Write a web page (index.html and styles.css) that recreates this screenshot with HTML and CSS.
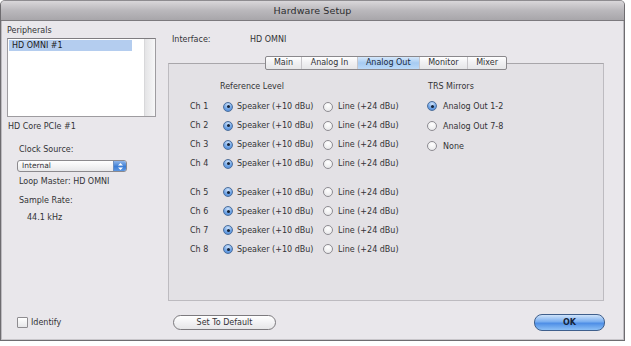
FILE: index.html
```html
<!DOCTYPE html>
<html>
<head>
<meta charset="utf-8">
<link rel="stylesheet" href="styles.css">
</head>
<body>
<div class="window">
  <div class="titlebar">Hardware Setup</div>
  <div class="main">
    <div class="left">
      <div class="txt">Peripherals</div>
      <div class="listbox">
        <div class="list-area"><div class="sel-row">HD OMNI #1</div></div>
        <div class="scroll"></div>
      </div>
      <div class="txt device">HD Core PCIe #1</div>
      <div class="txt clock-label">Clock Source:</div>
      <div class="select"><span class="select-text">Internal</span><span class="stepper"><svg width="7" height="9" viewBox="0 0 7 9"><path d="M1 3.5 L3.5 1 L6 3.5 Z M1 5.5 L3.5 8 L6 5.5 Z" fill="#fff"/></svg></span></div>
      <div class="txt loop">Loop Master: HD OMNI</div>
      <div class="txt rate-label">Sample Rate:</div>
      <div class="txt rate">44.1 kHz</div>
    </div>
    <div class="right">
      <div class="iface"><span class="iface-label">Interface:</span><span>HD OMNI</span></div>
      <div class="tabs">
        <span class="tab">Main</span><span class="tab">Analog In</span><span class="tab active">Analog Out</span><span class="tab">Monitor</span><span class="tab last">Mixer</span>
      </div>
      <div class="group">
        <div class="col-ref">
          <div class="txt head ref-head">Reference Level</div>
          <div class="rows">
            <div class="row"><span class="ch">Ch 1</span><span class="radio on"></span><span class="opt">Speaker (+10 dBu)</span><span class="radio"></span><span class="opt2">Line (+24 dBu)</span></div>
            <div class="row"><span class="ch">Ch 2</span><span class="radio on"></span><span class="opt">Speaker (+10 dBu)</span><span class="radio"></span><span class="opt2">Line (+24 dBu)</span></div>
            <div class="row"><span class="ch">Ch 3</span><span class="radio on"></span><span class="opt">Speaker (+10 dBu)</span><span class="radio"></span><span class="opt2">Line (+24 dBu)</span></div>
            <div class="row"><span class="ch">Ch 4</span><span class="radio on"></span><span class="opt">Speaker (+10 dBu)</span><span class="radio"></span><span class="opt2">Line (+24 dBu)</span></div>
          </div>
          <div class="rows rows2">
            <div class="row"><span class="ch">Ch 5</span><span class="radio on"></span><span class="opt">Speaker (+10 dBu)</span><span class="radio"></span><span class="opt2">Line (+24 dBu)</span></div>
            <div class="row"><span class="ch">Ch 6</span><span class="radio on"></span><span class="opt">Speaker (+10 dBu)</span><span class="radio"></span><span class="opt2">Line (+24 dBu)</span></div>
            <div class="row"><span class="ch">Ch 7</span><span class="radio on"></span><span class="opt">Speaker (+10 dBu)</span><span class="radio"></span><span class="opt2">Line (+24 dBu)</span></div>
            <div class="row"><span class="ch">Ch 8</span><span class="radio on"></span><span class="opt">Speaker (+10 dBu)</span><span class="radio"></span><span class="opt2">Line (+24 dBu)</span></div>
          </div>
        </div>
        <div class="col-trs">
          <div class="txt head">TRS Mirrors</div>
          <div class="trs-rows">
            <div class="trow"><span class="radio on"></span><span class="topt">Analog Out 1-2</span></div>
            <div class="trow"><span class="radio"></span><span class="topt">Analog Out 7-8</span></div>
            <div class="trow"><span class="radio"></span><span class="topt">None</span></div>
          </div>
        </div>
      </div>
    </div>
  </div>
  <div class="bottom">
    <div class="identify"><span class="check"></span><span class="txt">Identify</span></div>
    <div class="btn default-btn">Set To Default</div>
    <div class="btn ok-btn">OK</div>
  </div>
</div>
</body>
</html>
```

FILE: styles.css
```css
html, body {
  margin: 0;
  padding: 0;
  background: #ffffff;
}
body {
  font-family: "DejaVu Sans", "Liberation Sans", sans-serif;
  font-size: 8px;
  color: #333336;
}
.window {
  width: 625px;
  height: 341px;
  box-sizing: border-box;
  background: #e9e7eb;
  border: 1px solid #6e6c70;
  border-top-color: #8e8c90;
  border-radius: 5px 5px 0 0;
  box-shadow: inset 1px 0 0 #bdbbc0, inset -1px 0 0 #bdbbc0, inset 0 -1px 0 #c8c6ca;
  overflow: hidden;
}
.titlebar {
  height: 19px;
  line-height: 19px;
  text-align: center;
  font-size: 9.5px;
  color: #2c2c2e;
  background: linear-gradient(#d9d7da, #bab8bc 50%, #a8a6aa);
  border-bottom: 1px solid #7c7a7e;
  letter-spacing: 0.1px;
}
.txt {
  line-height: 10px;
  white-space: nowrap;
}
.main {
  display: grid;
  grid-template-columns: 167px 436px;
}
.left {
  padding-left: 6px;
}
.left > .txt:first-child {
  margin-top: 5px;
}
.listbox {
  margin-top: 2px;
  width: 149px;
  height: 79px;
  box-sizing: border-box;
  border: 1px solid #9e9ca0;
  border-top-color: #7e7c80;
  background: #ffffff;
  display: flex;
}
.list-area {
  flex: 1;
  padding: 1px 0 0 1px;
}
.sel-row {
  width: 123px;
  height: 11px;
  line-height: 11px;
  background: #b4cdef;
  padding-left: 3px;
  box-sizing: border-box;
  color: #1a1a1c;
}
.scroll {
  width: 10px;
  background: linear-gradient(90deg, #e4e4e6, #f7f7f8);
  border-left: 1px solid #d8d8da;
}
.device {
  margin-top: 5px;
  margin-left: 1px;
}
.clock-label {
  margin-top: 13px;
  margin-left: 12px;
}
.select {
  margin-top: 5px;
  margin-left: 10px;
  width: 110px;
  height: 12px;
  box-sizing: border-box;
  border: 1px solid #8c8a8e;
  border-radius: 3px;
  background: linear-gradient(#ffffff, #e8e8ea);
  display: flex;
  align-items: center;
  justify-content: space-between;
  overflow: hidden;
}
.select-text {
  padding-left: 4px;
  font-size: 7.5px;
  line-height: 10px;
}
.stepper {
  width: 12px;
  height: 10px;
  display: flex;
  align-items: center;
  justify-content: center;
  background: linear-gradient(#8fb6ea, #3d7fd6 55%, #5d97e2);
  border-left: 1px solid #6c8fc0;
}
.loop {
  margin-top: 5px;
  margin-left: 12px;
}
.rate-label {
  margin-top: 9px;
  margin-left: 12px;
}
.rate {
  margin-top: 7px;
  margin-left: 20px;
}
.right {
  display: flex;
  flex-direction: column;
}
.iface {
  margin-top: 14px;
  padding-left: 4px;
  line-height: 10px;
  display: flex;
}
.iface-label {
  width: 78px;
}
.tabs {
  margin-top: 11px;
  align-self: center;
  display: flex;
  height: 14px;
  box-sizing: border-box;
  border: 1px solid #8a888c;
  border-radius: 2px;
  background: linear-gradient(#ffffff, #f0f0f2 50%, #e6e6e8);
  position: relative;
  z-index: 1;
}
.tab {
  line-height: 12px;
  padding: 0 8.3px;
  border-right: 1px solid #c8c6ca;
  white-space: nowrap;
}
.tab.last {
  border-right: none;
}
.tab.active {
  background: linear-gradient(#d6e8fb, #a6cbf2 50%, #bcdaf8);
  color: #1a2a40;
}
.group {
  margin-top: -7px;
  height: 238px;
  box-sizing: border-box;
  border: 1px solid #bdbbc0;
  border-top-color: #a8a6aa;
  background: #e3e1e5;
  padding: 18px 0 0 21px;
  display: grid;
  grid-template-columns: 238px 1fr;
}
.ref-head {
  padding-left: 30px;
}
.rows {
  margin-top: 5px;
}
.rows2 {
  margin-top: 9.5px;
}
.row {
  height: 19px;
  display: flex;
  align-items: center;
  white-space: nowrap;
}
.ch {
  width: 33px;
}
.radio {
  width: 10px;
  height: 10px;
  box-sizing: border-box;
  border-radius: 50%;
  border: 1px solid #8e8c92;
  background: radial-gradient(circle at 50% 30%, #ffffff, #e4e4e6);
  flex: none;
  position: relative;
}
.radio.on {
  border-color: #4d6f9c;
  background: radial-gradient(circle at 50% 25%, #cfe3fb, #6aa0e4 60%, #4c86d4);
}
.radio.on::after {
  content: "";
  position: absolute;
  left: 2.5px;
  top: 2.5px;
  width: 3px;
  height: 3px;
  border-radius: 50%;
  background: #15233a;
}
.opt {
  margin-left: 4px;
  width: 86px;
}
.opt2 {
  margin-left: 5px;
}
.col-trs {
  padding-left: 0;
}
.trs-rows {
  margin-top: 4px;
}
.trow {
  height: 20px;
  display: flex;
  align-items: center;
  margin-left: -1px;
  white-space: nowrap;
}
.topt {
  margin-left: 6px;
}
.bottom {
  margin-top: 13px;
  height: 17px;
  display: flex;
  align-items: center;
}
.identify {
  margin-left: 16px;
  width: 156px;
  display: flex;
  align-items: center;
}
.check {
  width: 11px;
  height: 11px;
  box-sizing: border-box;
  border: 1px solid #8e8c90;
  border-radius: 1px;
  background: linear-gradient(#ffffff, #e6e6e8);
  margin-right: 3px;
}
.btn {
  box-sizing: border-box;
  border-radius: 8px;
  text-align: center;
  white-space: nowrap;
}
.default-btn {
  width: 103px;
  height: 15px;
  line-height: 13px;
  border: 1px solid #7c7a7e;
  background: linear-gradient(#ffffff, #f2f2f4 50%, #e6e6e8);
}
.ok-btn {
  margin-left: auto;
  margin-right: 19px;
  width: 71px;
  height: 17px;
  line-height: 15px;
  border: 1px solid #3f5f8c;
  background: linear-gradient(#cfe3fa, #79aef0 45%, #4e8ee6 55%, #8cc0f6);
  font-weight: bold;
  color: #14233a;
}
```
